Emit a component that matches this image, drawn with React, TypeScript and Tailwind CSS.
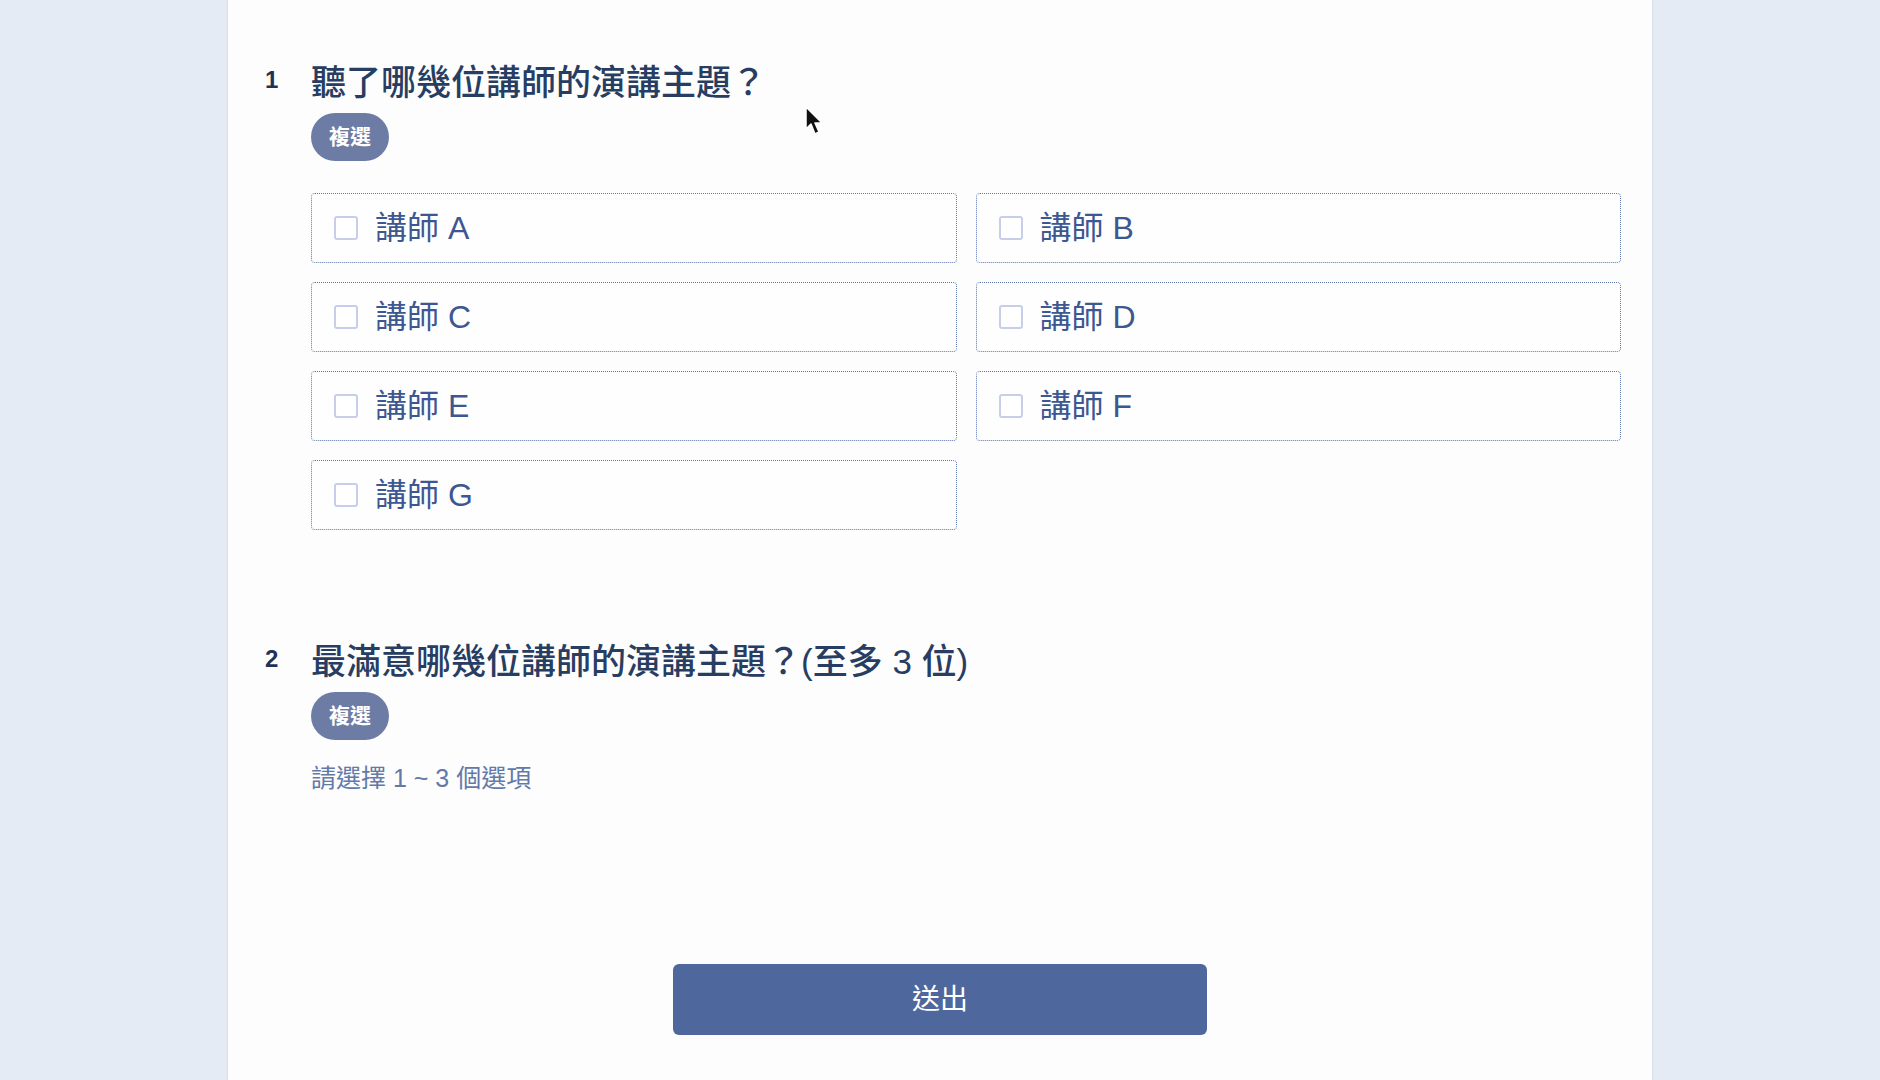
import React from "react";

const FONT = '"Liberation Sans", "Noto Sans CJK TC", sans-serif';

function Option({ label }: { label: string }) {
  return (
    <div className="flex h-[70px] items-center rounded-[4px] border border-dotted border-[#5f76ad] bg-[#fefefe] pl-[22px]">
      <div className="h-[24px] w-[24px] rounded-[3px] border-2 border-[#c6cee9] bg-white" />
      <span className="ml-[17px] text-[32px] leading-none text-[#3d5792]">{label}</span>
    </div>
  );
}

function Badge() {
  return (
    <div className="mt-[7px] flex h-[48px] w-[78px] items-center justify-center rounded-full bg-[#6c7ca5] text-[21px] font-bold text-white">
      複選
    </div>
  );
}

function Question({ num, title, children }: { num: string; title: string; children?: React.ReactNode }) {
  return (
    <div className="flex">
      <div className="w-[46px] pt-[9px] text-[24px] font-bold leading-[22px] text-[#1f3357]">{num}</div>
      <div className="flex w-[1310px] flex-col">
        <div className="h-[46px] text-[35px] font-medium leading-[46px] text-[#283d62]">{title}</div>
        <Badge />
        {children}
      </div>
    </div>
  );
}

export default function App() {
  const opts = ["講師 A", "講師 B", "講師 C", "講師 D", "講師 E", "講師 F", "講師 G"];
  return (
    <div className="min-h-[1080px] w-full bg-[#e4ebf4]" style={{ fontFamily: FONT }}>
      <div className="relative mx-auto flex min-h-[1080px] w-[1426px] flex-col border-x border-[#d6deea] bg-[#fdfdfd] pl-[37px] pt-[60px]">
        <Question num="1" title="聽了哪幾位講師的演講主題？">
          <div className="mt-[32px] grid grid-cols-2 gap-[19px]">
            {opts.map((o) => (
              <Option key={o} label={o} />
            ))}
          </div>
        </Question>
        <div className="mt-[109px]">
          <Question num="2" title="最滿意哪幾位講師的演講主題？(至多 3 位)">
            <div className="mt-[23px] h-[30px] text-[25px] leading-[30px] text-[#6379a9]">請選擇 1 ~ 3 個選項</div>
          </Question>
        </div>
        <div className="mt-[171px] flex justify-center pr-[37px]">
          <button className="flex h-[71px] w-[534px] items-center justify-center rounded-[6px] bg-[#4e679d] text-[28px] text-white">
            送出
          </button>
        </div>
        <svg className="absolute left-[577px] top-[106px]" width="18" height="30" viewBox="0 0 18 30">
          <path d="M1 1 L1 23 L6 18 L10 28 L14 26 L10 17 L17 17 Z" fill="#111" stroke="#fff" strokeWidth="1.5" strokeLinejoin="round" />
        </svg>
      </div>
    </div>
  );
}
